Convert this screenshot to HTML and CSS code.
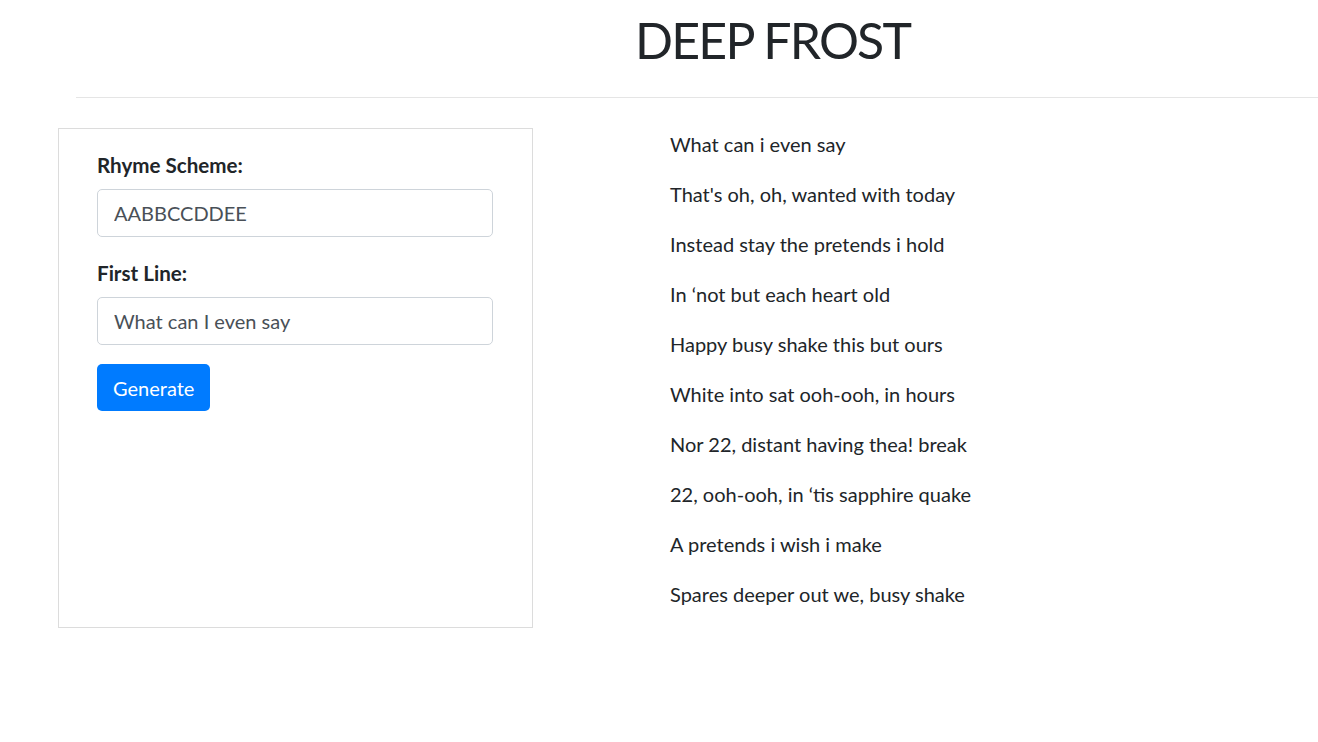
FILE: index.html
```html
<!DOCTYPE html>
<html>
<head>
<meta charset="utf-8">
<link rel="stylesheet" href="styles.css">
</head>
<body>
<header class="top">
  <h1 class="title">DEEP FROST</h1>
</header>
<hr class="rule">
<main class="main">
  <section class="panel">
    <form class="form">
      <label class="label" for="scheme">Rhyme Scheme:</label>
      <input class="input" id="scheme" type="text" value="AABBCCDDEE">
      <label class="label" for="first">First Line:</label>
      <input class="input" id="first" type="text" value="What can I even say">
      <button class="btn" type="button">Generate</button>
    </form>
  </section>
  <section class="poem">
    <p class="line">What can i even say</p>
    <p class="line">That's oh, oh, wanted with today</p>
    <p class="line">Instead stay the pretends i hold</p>
    <p class="line">In ‘not but each heart old</p>
    <p class="line">Happy busy shake this but ours</p>
    <p class="line">White into sat ooh-ooh, in hours</p>
    <p class="line">Nor 22, distant having thea! break</p>
    <p class="line">22, ooh-ooh, in ‘tis sapphire quake</p>
    <p class="line">A pretends i wish i make</p>
    <p class="line">Spares deeper out we, busy shake</p>
  </section>
</main>
</body>
</html>
```
FILE: styles.css
```css
* { box-sizing: border-box; }
html, body { margin: 0; padding: 0; }
body {
  font-family: Lato, "Noto Sans", sans-serif;
  color: #212529;
  background: #fff;
  width: 1318px;
  height: 742px;
  overflow: hidden;
}
.top {
  display: flex;
  justify-content: flex-start;
  padding-left: 635px;
  height: 81px;
  align-items: flex-start;
}
.title {
  margin: 10px 0 0 0;
  font-size: 50px;
  letter-spacing: -1.8px;
  font-weight: 400;
  line-height: 60px;
}
.rule {
  margin: 16px 0 0 76px;
  border: 0;
  border-top: 1px solid #e5e5e5;
  height: 0;
}
.main {
  display: flex;
  padding: 30px 0 0 58px;
}
.panel {
  width: 475px;
  height: 500px;
  border: 1px solid #dcdcdc;
  padding: 22px 39px 0 38px;
}
.form {
  display: flex;
  flex-direction: column;
  align-items: flex-start;
}
.label {
  font-size: 20.6px;
  font-weight: 700;
  line-height: 28px;
  margin-bottom: 10px;
}
.input {
  width: 396px;
  height: 48px;
  border: 1px solid #ced4da;
  border-radius: 5px;
  padding: 0 16px;
  font-family: inherit;
  font-size: 20px;
  color: #495057;
  margin-bottom: 22px;
}
.btn {
  background: #007bff;
  color: #fff;
  border: 0;
  border-radius: 5px;
  font-family: inherit;
  font-size: 20px;
  height: 47px;
  padding: 0 16px;
  margin-top: -3px;
}
.poem {
  margin-left: 137px;
  padding-top: 1px;
  display: flex;
  flex-direction: column;
  gap: 20px;
}
.line {
  margin: 0;
  font-size: 20px;
  line-height: 30px;
}
```
